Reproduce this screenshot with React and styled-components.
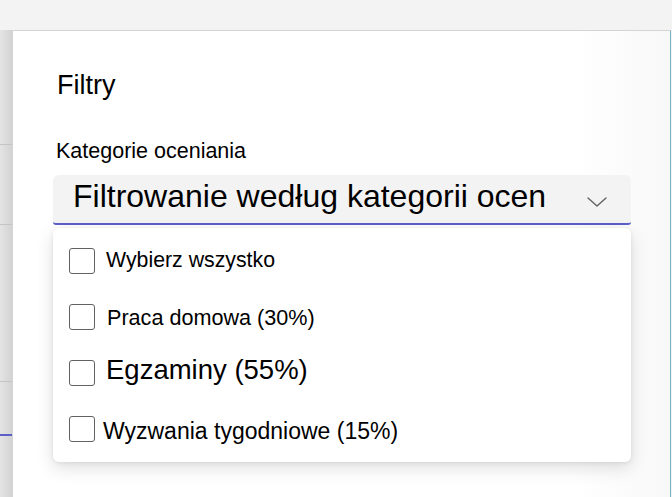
import React from 'react';
import styled, { createGlobalStyle } from 'styled-components';

const GlobalStyle = createGlobalStyle`
  html, body {
    margin: 0;
    padding: 0;
    background: #f3f3f3;
  }
  * {
    box-sizing: border-box;
  }
`;

const Screen = styled.div`
  width: 672px;
  height: 497px;
  display: flex;
  flex-direction: column;
  overflow: hidden;
  font-family: 'Liberation Sans', Arial, sans-serif;
  color: #000;
  background: #f3f3f3;
`;

const TopBar = styled.div`
  height: 30px;
  flex-shrink: 0;
  background: #f3f3f3;
`;

const Body = styled.div`
  flex: 1;
  display: flex;
`;

const SideStrip = styled.div`
  width: 12px;
  flex-shrink: 0;
  display: flex;
  flex-direction: column;
  background: linear-gradient(to right, #e4e4e4, #d3d3d3);
`;

const StripRow = styled.div`
  height: ${(props) => props.h}px;
  flex-shrink: 0;
  border-bottom: ${(props) => (props.accent ? '2px solid #5b5fc7' : '1px solid #c4c4c4')};
`;

const Panel = styled.div`
  flex: 1;
  margin-right: 1px;
  background: linear-gradient(to right, #ffffff 85%, #f8f8f8);
  border-top: 1px solid #d4d4d4;
  border-left: 1px solid #d4d4d4;
  border-right: 1px solid #74b4bc;
  padding: 38px 39px 0 40px;
  display: flex;
  flex-direction: column;
`;

const Title = styled.h2`
  margin: 0 0 0 4px;
  font-size: 27px;
  line-height: 32px;
  font-weight: 400;
`;

const FieldLabel = styled.label`
  margin: 38px 0 0 3px;
  font-size: 21.5px;
  line-height: 24px;
`;

const Select = styled.div`
  margin-top: 12px;
  height: 50px;
  display: flex;
  justify-content: space-between;
  padding: 3px 24px 0 20px;
  background: #f3f3f3;
  border-bottom: 2px solid #5b5fc7;
  border-radius: 6px 6px 3px 3px;
`;

const SelectText = styled.span`
  font-size: 32px;
  line-height: 37px;
`;

const Chevron = styled.svg`
  width: 20px;
  height: 10px;
  margin-top: 19px;
`;

const Menu = styled.div`
  margin-top: 3px;
  width: 578px;
  padding: 5px 0;
  background: #fff;
  border-radius: 6px;
  box-shadow: 0 6px 18px rgba(0, 0, 0, 0.13), 0 1px 4px rgba(0, 0, 0, 0.08);
`;

const Option = styled.div`
  height: 56px;
  display: flex;
  align-items: center;
  padding-left: 16px;
`;

const Box = styled.span`
  width: 26px;
  height: 26px;
  flex-shrink: 0;
  border: 1px solid #616161;
  border-radius: 3px;
  background: #fff;
`;

const OptionText = styled.span`
  margin-left: ${(props) => props.indent}px;
  font-size: ${(props) => props.size}px;
  line-height: 1.15;
  position: relative;
  top: ${(props) => props.shift || 0}px;
`;

const options = [
  { label: 'Wybierz wszystko', size: 21.3, indent: 11, shift: -1 },
  { label: 'Praca domowa (30%)', size: 21.6, indent: 12, shift: 1 },
  { label: 'Egzaminy (55%)', size: 27.5, indent: 11, shift: -3 },
  { label: 'Wyzwania tygodniowe (15%)', size: 23, indent: 8, shift: 2 },
];

export default function App() {
  return (
    <Screen>
      <GlobalStyle />
      <TopBar />
      <Body>
        <SideStrip>
          <StripRow h={115} />
          <StripRow h={80} />
          <StripRow h={157} />
          <StripRow h={54} accent />
        </SideStrip>
        <Panel>
          <Title>Filtry</Title>
          <FieldLabel>Kategorie oceniania</FieldLabel>
          <Select>
            <SelectText>Filtrowanie według kategorii ocen</SelectText>
            <Chevron viewBox="0 0 20 10">
              <path d="M1 1 L10 9 L19 1" fill="none" stroke="#616161" strokeWidth="1.4" strokeLinecap="round" strokeLinejoin="round" />
            </Chevron>
          </Select>
          <Menu>
            {options.map((o) => (
              <Option key={o.label}>
                <Box />
                <OptionText size={o.size} indent={o.indent} shift={o.shift}>
                  {o.label}
                </OptionText>
              </Option>
            ))}
          </Menu>
        </Panel>
      </Body>
    </Screen>
  );
}
